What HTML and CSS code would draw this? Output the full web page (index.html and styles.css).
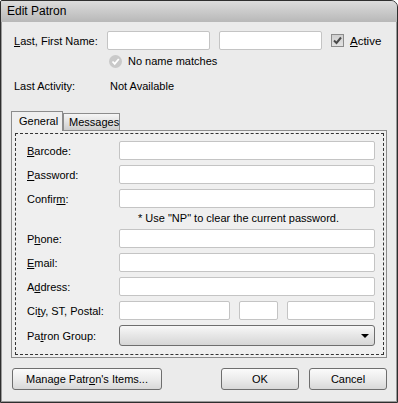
FILE: index.html
```html
<!DOCTYPE html>
<html lang="en">
<head>
    <meta charset="UTF-8">
    <title>Edit Patron</title>
    <link rel="stylesheet" href="styles.css">
</head>
<body>
    <div class="window">
        <div class="titlebar">Edit Patron</div>
        <div class="content">
            <!-- Name / status rows -->
            <div class="name-row">
                <span class="top-label"><u>L</u>ast, First Name:</span>
                <input type="text" class="field name-field">
                <input type="text" class="field name-field">
                <span class="checkbox">
                    <svg width="9" height="9" viewBox="0 0 9 9"><path d="M1 4.5 L3.5 7 L8 1.5" fill="none" stroke="#4a4a4a" stroke-width="2"/></svg>
                </span>
                <span class="check-label"><u>A</u>ctive</span>
            </div>
            <div class="match-row">
                <svg class="match-icon" width="13" height="13" viewBox="0 0 13 13">
                    <circle cx="6.5" cy="6.5" r="6.5" fill="#c9c9c9"/>
                    <path d="M3.5 6.5 L5.7 8.8 L9.8 4" fill="none" stroke="#fff" stroke-width="1.8"/>
                </svg>
                <span>No name matches</span>
            </div>
            <div class="activity-row">
                <span class="top-label">Last Activity:</span>
                <span>Not Available</span>
            </div>

            <!-- Tabs -->
            <div class="tabs">
                <div class="tab active">General</div>
                <div class="tab">Messages</div>
            </div>
            <div class="tab-panel">
                <div class="focus-box">
                    <div class="form-grid">
                        <label><u>B</u>arcode:</label>
                        <input type="text" class="field">
                        <label><u>P</u>assword:</label>
                        <input type="password" class="field">
                        <label>Confir<u>m</u>:</label>
                        <input type="password" class="field">
                        <span></span>
                        <small class="note">* Use "NP" to clear the current password.</small>
                        <label>P<u>h</u>one:</label>
                        <input type="text" class="field">
                        <label><u>E</u>mail:</label>
                        <input type="text" class="field">
                        <label>A<u>d</u>dress:</label>
                        <input type="text" class="field">
                        <label>Ci<u>t</u>y, ST, Postal:</label>
                        <div class="city-group">
                            <input type="text" class="field">
                            <input type="text" class="field">
                            <input type="text" class="field">
                        </div>
                        <label>Pa<u>t</u>ron Group:</label>
                        <div class="select-box"><span class="arrow"></span></div>
                    </div>
                </div>
            </div>

            <!-- Dialog buttons -->
            <div class="button-row">
                <button class="btn btn-wide">Manage Patr<u>o</u>n's Items...</button>
                <div class="button-group">
                    <button class="btn">OK</button>
                    <button class="btn">Cancel</button>
                </div>
            </div>
        </div>
    </div>
</body>
</html>
```

FILE: styles.css
```css
/* Base styles */
body {
    margin: 0;
    background: #fff;
    font-family: "Liberation Sans", Arial, sans-serif;
    font-size: 11px;
    color: #000;
}

u {
    text-decoration: underline;
    text-underline-offset: 1px;
}

.window {
    width: 398px;
    height: 403px;
    box-sizing: border-box;
    border: 1px solid #2e2e2e;
    border-radius: 2px 7px 0 0;
    background-color: #ebebeb;
    box-shadow: inset 1px 0 0 #9a9a9a, inset -1px 0 0 #9a9a9a, inset 0 -1px 0 #9a9a9a;
    overflow: hidden;
}

.titlebar {
    height: 21px;
    padding-left: 6px;
    line-height: 21px;
    font-size: 12px;
    background: linear-gradient(#dcdcdc, #b8b8b8);
}

.content {
    padding: 0 10px;
}

/* Top rows */
.name-row {
    display: flex;
    align-items: center;
    height: 19px;
    margin-top: 9px;
    padding-left: 3px;
}

.top-label {
    width: 93px;
    flex: none;
}

.field {
    height: 19px;
    box-sizing: border-box;
    margin: 0;
    padding: 0 3px;
    border: 1px solid #c4c4c4;
    border-radius: 2px;
    background-color: #fff;
    font: inherit;
}

.name-field {
    width: 103px;
    margin-right: 9px;
}

.checkbox {
    width: 13px;
    height: 13px;
    box-sizing: border-box;
    border: 1px solid #8c8c8c;
    background: linear-gradient(#cfcfcf, #e2e2e2);
    display: flex;
    align-items: center;
    justify-content: center;
    margin-right: 6px;
}

.check-label {
    font-size: 11.5px;
}

.match-row {
    display: flex;
    align-items: center;
    height: 18px;
    margin-top: 2px;
    padding-left: 98px;
}

.match-icon {
    margin-right: 6px;
}

.activity-row {
    display: flex;
    align-items: center;
    height: 16px;
    margin-top: 8px;
    padding-left: 3px;
}

.activity-row .top-label {
    width: 96px;
}

/* Tab styles */
.tabs {
    display: flex;
    align-items: flex-end;
    height: 19px;
    margin-top: 17px;
    position: relative;
    z-index: 1;
}

.tab {
    height: 17px;
    box-sizing: border-box;
    border: 1px solid #8c8c8c;
    border-bottom: none;
    padding: 0 4px 0 5px;
    width: 57px;
    line-height: 17px;
    background: linear-gradient(#f6f6f6, #cdcdcd);
}

.tab.active {
    height: 20px;
    width: 52px;
    line-height: 18px;
    padding: 0 0 0 7px;
    background: #efefef;
    margin-bottom: -1px;
}

.tab-panel {
    width: 376px;
    height: 228px;
    box-sizing: border-box;
    border: 1px solid #8c8c8c;
    background-color: #efefef;
}

.focus-box {
    margin: 2px 2px 2px 3px;
    height: 222px;
    box-sizing: border-box;
    border: 1px dashed #333;
    padding: 7px 0 0 11px;
}

.form-grid {
    display: grid;
    grid-template-columns: 92px 256px;
    grid-template-rows: repeat(3, 19px) 11px repeat(4, 19px) 21px;
    row-gap: 5px;
    align-items: center;
}

.form-grid .field {
    width: 100%;
}

.note {
    font-size: 11px;
    padding-left: 19px;
    line-height: 11px;
}

.city-group {
    display: flex;
    gap: 9px;
}

.city-group .field:nth-child(1) { width: 111px; }
.city-group .field:nth-child(2) { width: 39px; }
.city-group .field:nth-child(3) { width: 88px; }

.select-box {
    height: 21px;
    box-sizing: border-box;
    border: 1px solid #6e6e6e;
    border-radius: 3px;
    background: linear-gradient(#f8f8f8, #e6e6e6 50%, #d6d6d6);
    position: relative;
}

.arrow {
    position: absolute;
    right: 5px;
    top: 8px;
    border-left: 4px solid transparent;
    border-right: 4px solid transparent;
    border-top: 4px solid #000;
}

/* Buttons */
.button-row {
    display: flex;
    justify-content: space-between;
    margin-top: 10px;
    padding-left: 1px;
}

.button-group {
    display: flex;
    gap: 10px;
}

.btn {
    width: 78px;
    height: 22px;
    padding: 0;
    border: 1px solid #6e6e6e;
    border-radius: 3px;
    background: linear-gradient(#fbfbfb, #ececec 50%, #d8d8d8);
    font-family: "Liberation Sans", Arial, sans-serif;
    font-size: 11px;
    color: #000;
}

.btn-wide {
    width: 150px;
}
```
